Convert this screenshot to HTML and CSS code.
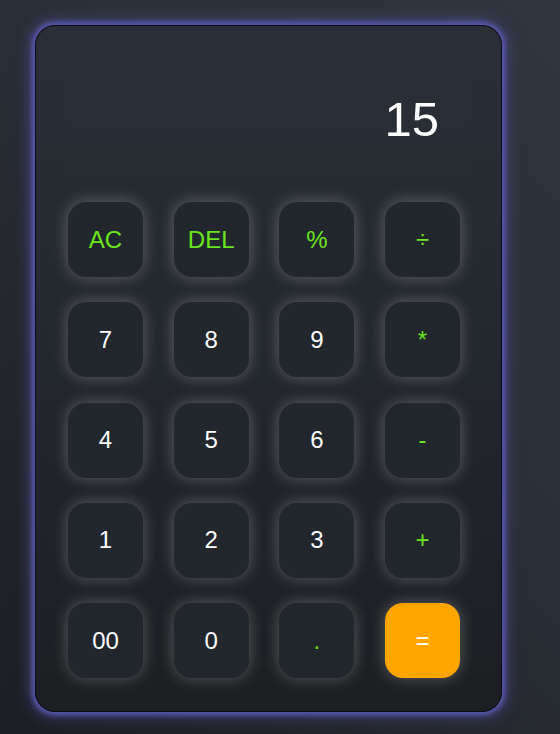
FILE: index.html
```html
<!DOCTYPE html>
<html lang="en">
<head>
<meta charset="utf-8">
<title>Calculator</title>
<link rel="stylesheet" href="styles.css">
</head>
<body>
  <div class="calculator">
    <div class="display"><span class="value">15</span></div>
    <div class="keys">
      <button class="key op">AC</button>
      <button class="key op">DEL</button>
      <button class="key op">%</button>
      <button class="key op">÷</button>
      <button class="key">7</button>
      <button class="key">8</button>
      <button class="key">9</button>
      <button class="key op">*</button>
      <button class="key">4</button>
      <button class="key">5</button>
      <button class="key">6</button>
      <button class="key op">-</button>
      <button class="key">1</button>
      <button class="key">2</button>
      <button class="key">3</button>
      <button class="key op">+</button>
      <button class="key">00</button>
      <button class="key">0</button>
      <button class="key op">.</button>
      <button class="key equal">=</button>
    </div>
  </div>
</body>
</html>
```

FILE: styles.css
```css
html, body {
  margin: 0;
  padding: 0;
}
body {
  min-height: 734px;
  background: linear-gradient(45deg, #1b1e23 0%, #2a2e36 55%, #30353e 100%);
  font-family: "Liberation Sans", Arial, sans-serif;
  padding: 25px 0 0 35px;
  box-sizing: border-box;
}
.calculator {
  width: 467px;
  box-sizing: border-box;
  border: 1px solid #0b0b14;
  border-radius: 20px;
  padding: 14px 30px 33px 29px;
  background: linear-gradient(180deg, #2a2f37 0%, #23272e 50%, #1c1e22 100%);
  box-shadow: 0 0 5px 3px #5858b0, 0 0 16px 5px rgba(85, 85, 170, 0.55);
}
.display {
  height: 137px;
  box-sizing: border-box;
  display: flex;
  justify-content: flex-end;
  align-items: flex-end;
  padding: 0 32px 34px 0;
  background: rgba(255, 255, 255, 0.008);
}
.value {
  color: #ffffff;
  font-size: 49px;
  line-height: 48px;
}
.keys {
  margin-top: 25px;
  padding-left: 3px;
  display: grid;
  grid-template-columns: repeat(4, 75px);
  grid-auto-rows: 75px;
  column-gap: 30.67px;
  row-gap: 25.25px;
}
.key {
  border: none;
  border-radius: 18px;
  background: #22262d;
  color: #ffffff;
  font-family: "Liberation Sans", Arial, sans-serif;
  font-size: 24px;
  padding: 0;
  box-shadow: 0 0 16px rgba(255, 255, 255, 0.28);
  cursor: pointer;
}
.key.op {
  color: #6ae61c;
}
.key.equal {
  background: #ffa500;
  color: #ffffff;
}
```
